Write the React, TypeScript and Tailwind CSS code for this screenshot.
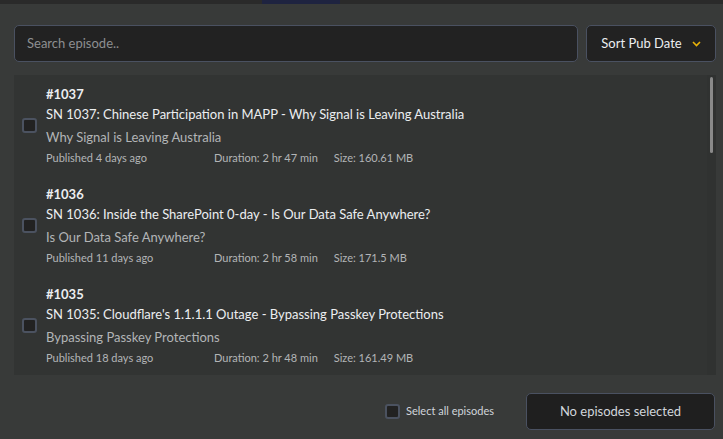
import React from "react";

type Ep = { num: string; title: string; sub: string; pub: string; dur: string; size: string };

const eps: Ep[] = [
  {
    num: "#1037",
    title: "SN 1037: Chinese Participation in MAPP - Why Signal is Leaving Australia",
    sub: "Why Signal is Leaving Australia",
    pub: "Published 4 days ago",
    dur: "Duration: 2 hr 47 min",
    size: "Size: 160.61 MB",
  },
  {
    num: "#1036",
    title: "SN 1036: Inside the SharePoint 0-day - Is Our Data Safe Anywhere?",
    sub: "Is Our Data Safe Anywhere?",
    pub: "Published 11 days ago",
    dur: "Duration: 2 hr 58 min",
    size: "Size: 171.5 MB",
  },
  {
    num: "#1035",
    title: "SN 1035: Cloudflare's 1.1.1.1 Outage - Bypassing Passkey Protections",
    sub: "Bypassing Passkey Protections",
    pub: "Published 18 days ago",
    dur: "Duration: 2 hr 48 min",
    size: "Size: 161.49 MB",
  },
];

function Box() {
  return <div className="w-[15px] h-[15px] rounded-[3px] border-2 border-[#4b5260] bg-[#222222] shrink-0" />;
}

export default function App() {
  return (
    <div
      className="w-[723px] h-[439px] overflow-hidden bg-[#383a39] flex flex-col"
      style={{ fontFamily: "Lato, 'Noto Sans', sans-serif" }}
    >
      <div className="h-[4px] flex shrink-0 bg-[#2a2a2a]">
        <div className="w-[262px]" />
        <div className="w-[78px] bg-[#1e2340]" />
      </div>
      <div className="flex gap-2 pl-[14px] pr-[7px] pt-[21px]">
        <div className="flex-1 h-[37px] rounded-[5px] border border-[#4a5161] bg-[#222222] flex items-center px-3">
          <span className="text-[13px] text-[#8d8f91]">Search episode..</span>
        </div>
        <div className="w-[130px] h-[37px] rounded-[5px] border border-[#4a5161] bg-[#222222] flex items-center justify-center gap-[10px]">
          <span className="text-[13px] text-[#eceef0]">Sort Pub Date</span>
          <svg width="9" height="6" viewBox="0 0 9 6" fill="none">
            <path d="M1 1l3.5 3.5L8 1" stroke="#eab308" strokeWidth="1.6" />
          </svg>
        </div>
      </div>
      <div className="mt-[13px] ml-[14px] mr-[7px] h-[300px] flex">
        <div className="flex-1 flex flex-col bg-[#323433]">
          {eps.map((e) => (
            <div key={e.num} className="h-[100px] flex items-center pl-[8px]">
              <Box />
              <div className="ml-[9px] flex flex-col">
                <div className="text-[13px] font-bold text-[#eceef0] leading-[20px]">{e.num}</div>
                <div className="text-[13px] text-[#eceef0] leading-[20px]">{e.title}</div>
                <div className="text-[13px] text-[#b3b5b7] leading-[20px] mt-[3px]">{e.sub}</div>
                <div className="flex text-[11px] text-[#b3b5b7] leading-[16px] mt-[3px]">
                  <span className="w-[168px]">{e.pub}</span>
                  <span>{e.dur}</span>
                  <span className="ml-4">{e.size}</span>
                </div>
              </div>
            </div>
          ))}
        </div>
        <div className="w-[9px] bg-[#303231] flex justify-center pt-[2px]">
          <div className="w-[3px] h-[76px] bg-[#8a8a8a] rounded-sm" />
        </div>
      </div>
      <div className="flex items-center justify-end px-[8px] mt-[18px]">
        <Box />
        <span className="ml-[6px] text-[11px] text-[#d1d5db]">Select all episodes</span>
        <div className="ml-[32px] w-[189px] h-[37px] rounded-[5px] border border-[#4a5161] bg-[#1f1f1f] flex items-center justify-center">
          <span className="text-[13px] text-[#d1d5db]">No episodes selected</span>
        </div>
      </div>
    </div>
  );
}
